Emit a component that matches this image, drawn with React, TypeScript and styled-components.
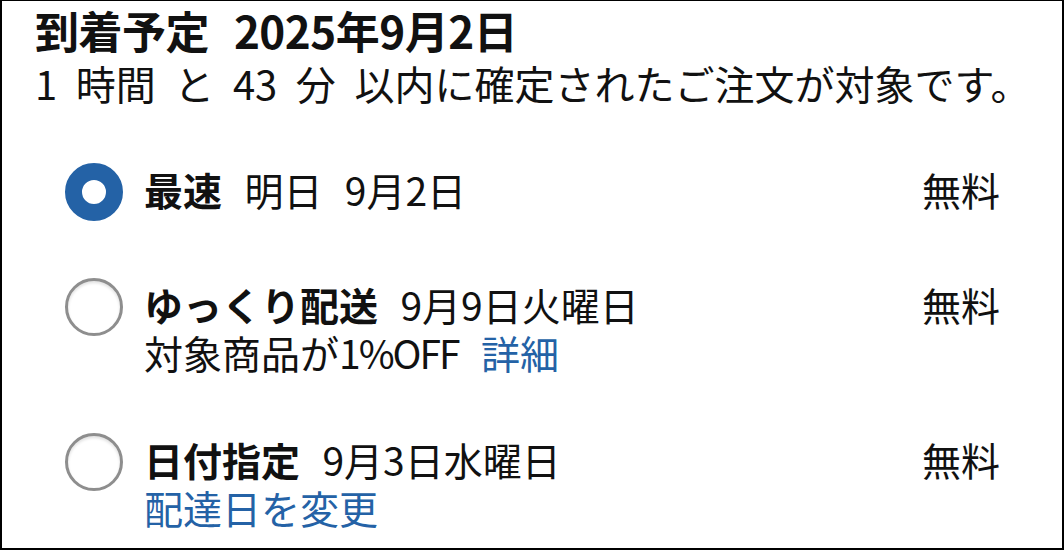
import React from 'react';
import styled, { createGlobalStyle } from 'styled-components';

const GlobalStyle = createGlobalStyle`
  html, body {
    margin: 0;
    padding: 0;
    background: #ffffff;
  }

  body {
    font-family: "Noto Sans CJK JP", "Noto Sans", sans-serif;
    color: #111111;
  }
`;

const blue = '#2462a6';

const Panel = styled.section`
  box-sizing: border-box;
  width: 1064px;
  height: 550px;
  padding: 1px 62px 0 33px;

  border: 2px solid #000000;
  border-top-width: 1px;
  background: #ffffff;
  overflow: hidden;
`;

const Title = styled.h1`
  margin: 0;

  font-size: 44px;
  font-weight: 700;
  line-height: 56px;
  letter-spacing: -0.5px;
  word-spacing: 0.35em;
`;

const Note = styled.p`
  margin: 0;

  font-size: 40px;
  font-weight: 400;
  line-height: 51px;
  white-space: nowrap;
  word-spacing: 0.24em;
`;

const Options = styled.ul`
  display: flex;
  flex-direction: column;
  gap: 57px;

  margin: 54px 0 0 30px;
  padding: 0;
  list-style: none;
`;

const Option = styled.li`
  display: flex;
  flex-direction: row;
  align-items: flex-start;
  gap: 21px;
`;

const Radio = styled.span<{ $checked?: boolean }>`
  box-sizing: border-box;
  flex: none;
  width: 58px;
  height: 58px;

  border-radius: 50%;
  background: #ffffff;
  border: ${(props) => (props.$checked ? `17.5px solid ${blue}` : '3px solid #8e8e8e')};
  box-shadow: ${(props) => (props.$checked ? 'none' : 'inset 0 2px 3px rgba(0, 0, 0, 0.12)')};
`;

const Body = styled.div`
  flex: 1;
  margin-top: 2px;
`;

const Line = styled.div`
  font-size: 39px;
  line-height: 48px;
  white-space: nowrap;
  word-spacing: 0.35em;
`;

const Name = styled.strong`
  font-weight: 700;
`;

const Latin = styled.span`
  letter-spacing: -2px;
`;

const Link = styled.span`
  color: ${blue};
`;

const Price = styled.span`
  flex: none;
  margin-top: 2px;

  font-size: 39px;
  line-height: 48px;
`;

interface DeliveryOption {
  name: string;
  date: string;
  price: string;
  checked?: boolean;
  sub?: React.ReactNode;
}

const options: Array<DeliveryOption> = [
  { name: '最速', date: '明日 9月2日', price: '無料', checked: true },
  {
    name: 'ゆっくり配送',
    date: '9月9日火曜日',
    price: '無料',
    sub: (
      <>
        対象商品が<Latin>1%OFF</Latin> <Link>詳細</Link>
      </>
    ),
  },
  {
    name: '日付指定',
    date: '9月3日水曜日',
    price: '無料',
    sub: <Link>配達日を変更</Link>,
  },
];

const App = () => {
  return (
    <>
      <GlobalStyle />
      <Panel>
        <Title>到着予定 2025年9月2日</Title>
        <Note>1 時間 と 43 分 以内に確定されたご注文が対象です。</Note>
        <Options>
          {options.map((el, i) => (
            <Option key={i}>
              <Radio $checked={el.checked} />
              <Body>
                <Line>
                  <Name>{el.name}</Name> {el.date}
                </Line>
                {el.sub && <Line>{el.sub}</Line>}
              </Body>
              <Price>{el.price}</Price>
            </Option>
          ))}
        </Options>
      </Panel>
    </>
  );
};

export default App;
